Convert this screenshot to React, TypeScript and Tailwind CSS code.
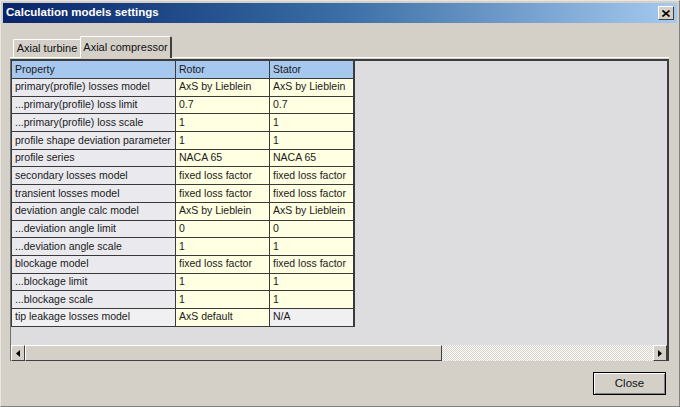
import React from 'react';

const rows: [string, string, string][] = [
  ['primary(profile) losses model', 'AxS by Lieblein', 'AxS by Lieblein'],
  ['...primary(profile) loss limit', '0.7', '0.7'],
  ['...primary(profile) loss scale', '1', '1'],
  ['profile shape deviation parameter', '1', '1'],
  ['profile series', 'NACA 65', 'NACA 65'],
  ['secondary losses model', 'fixed loss factor', 'fixed loss factor'],
  ['transient losses model', 'fixed loss factor', 'fixed loss factor'],
  ['deviation angle calc model', 'AxS by Lieblein', 'AxS by Lieblein'],
  ['...deviation angle limit', '0', '0'],
  ['...deviation angle scale', '1', '1'],
  ['blockage model', 'fixed loss factor', 'fixed loss factor'],
  ['...blockage limit', '1', '1'],
  ['...blockage scale', '1', '1'],
  ['tip leakage losses model', 'AxS default', 'N/A'],
];

const font = { fontFamily: '"Liberation Sans", Arial, sans-serif' };

function Cell({ children, bg }: { children: React.ReactNode; bg: string }) {
  return (
    <div className={`h-[17.7px] border-r border-b border-[#3a3a3a] pl-[3px] flex items-center whitespace-nowrap overflow-hidden ${bg}`}>
      {children}
    </div>
  );
}

function ScrollButton({ dir }: { dir: 'left' | 'right' }) {
  return (
    <div className="w-[14px] h-full bg-[#d4d0c8] border-t border-l border-t-white border-l-white border-r border-b border-r-[#404040] border-b-[#404040] flex items-center justify-center">
      <svg width="4" height="7" viewBox="0 0 4 7">
        {dir === 'left' ? <path d="M4 0 L0 3.5 L4 7 Z" fill="#000" /> : <path d="M0 0 L4 3.5 L0 7 Z" fill="#000" />}
      </svg>
    </div>
  );
}

export default function App() {
  return (
    <div
      className="w-[680px] h-[407px] bg-[#d4d0c8] border-t border-l border-t-[#e8e6e0] border-l-[#e8e6e0] border-r border-b border-r-[#808080] border-b-[#808080] p-[2px] flex flex-col overflow-hidden"
      style={font}
    >
      {/* Title bar */}
      <div className="h-[20px] bg-gradient-to-r from-[#0a246a] via-[#3a6ea5] to-[#a6caf0] flex items-center justify-between pl-[3px] pr-[3px]">
        <span className="text-white font-bold text-[11.5px]">Calculation models settings</span>
        <div className="w-[16px] h-[14px] bg-[#d4d0c8] border-t border-l border-t-white border-l-white border-r border-b border-r-[#404040] border-b-[#404040] flex items-center justify-center">
          <svg width="8" height="7" viewBox="0 0 8 7">
            <path d="M0.5 0.5 L7.5 6.5 M7.5 0.5 L0.5 6.5" stroke="#000" strokeWidth="1.6" />
          </svg>
        </div>
      </div>

      {/* Tabs */}
      <div className="mt-[12px] ml-[9px] flex items-end h-[22px] text-[11px] text-[#111]">
        <div className="ml-[1px] h-[18px] w-[67px] border-t border-l border-t-white border-l-white rounded-tl-[2px] flex items-center justify-center">
          Axial turbine
        </div>
        <div className="h-[22px] w-[92px] bg-[#d4d0c8] border-t border-l border-t-white border-l-white border-r-2 border-r-[#404040] rounded-t-[2px] flex items-center justify-center -mb-px relative z-10">
          Axial compressor
        </div>
      </div>

      {/* Panel */}
      <div className="ml-[7px] w-[659px] border-t border-t-white pt-[1px] flex flex-col">
        <div className="h-[302px] border-t-2 border-t-[#3c3c3c] border-l border-l-[#707070] border-r-2 border-r-[#3c3c3c] flex flex-col">
          <div className="flex-1 bg-[#dddcdf] text-[10.5px] text-[#1a1a1a]">
            <div className="grid grid-cols-[164px_94px_85px] w-fit border-l border-[#3a3a3a]">
              <div className="h-[18px] border-r border-b border-[#3a3a3a] pl-[3px] flex items-center bg-[#a6c8ee]">Property</div>
              <div className="h-[18px] border-r border-b border-[#3a3a3a] pl-[3px] flex items-center bg-[#a6c8ee]">Rotor</div>
              <div className="h-[18px] border-r-2 border-b border-[#3a3a3a] pl-[3px] flex items-center bg-[#a6c8ee]">Stator</div>
              {rows.map(([p, r, s], i) => {
                const last = i === rows.length - 1;
                return (
                  <React.Fragment key={p}>
                    <Cell bg={last ? 'bg-[#f0f0f2]' : 'bg-[#e9e9ee]'}>{p}</Cell>
                    <Cell bg="bg-[#ffffe1]">{r}</Cell>
                    <Cell bg={last ? 'bg-[#f0f0f2] border-r-2' : 'bg-[#ffffe1] border-r-2'}>{s}</Cell>
                  </React.Fragment>
                );
              })}
            </div>
          </div>
          {/* Horizontal scrollbar */}
          <div className="h-[16px] flex bg-[repeating-conic-gradient(#ffffff_0%_25%,#d4d0c8_0%_50%)] bg-[length:2px_2px]">
            <ScrollButton dir="left" />
            <div className="w-[417px] h-full bg-[#d4d0c8] border-t border-l border-t-white border-l-white border-r border-b border-r-[#404040] border-b-[#404040]" />
            <div className="flex-1" />
            <ScrollButton dir="right" />
          </div>
        </div>
      </div>

      {/* Footer */}
      <div className="flex justify-end mt-[11px] pr-[11px]">
        <button className="w-[73px] h-[23px] bg-[#d4d0c8] border border-black shadow-[inset_1px_1px_0_#ffffff,inset_-1px_-1px_0_#808080] text-[11.5px] text-[#111]" style={font}>
          Close
        </button>
      </div>
    </div>
  );
}
